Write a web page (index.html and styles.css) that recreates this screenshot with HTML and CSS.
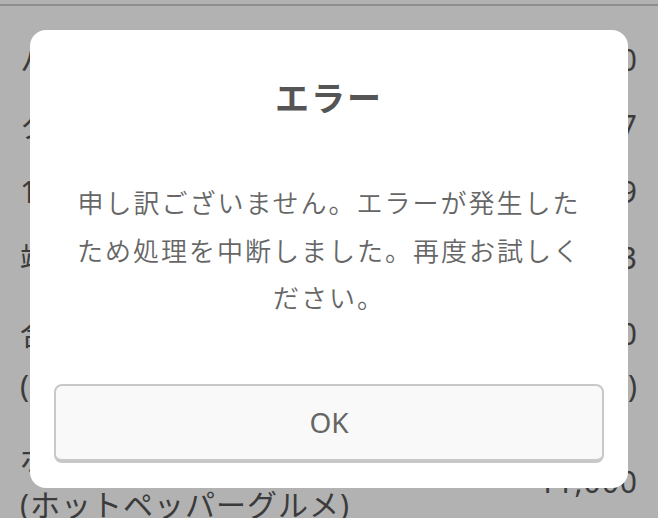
FILE: index.html
```html
<!DOCTYPE html>
<html lang="ja">
<head>
<meta charset="utf-8">
<title>エラー</title>
<link rel="stylesheet" href="styles.css">
</head>
<body>
<div class="page">
  <div class="header"></div>
  <ul class="rows">
    <li class="row"><span>ハンバーグ定食</span><span>1,000</span></li>
    <li class="row"><span>タピオカドリンク</span><span>457</span></li>
    <li class="row"><span>10%対象</span><span>1,459</span></li>
    <li class="row"><span>端数調整</span><span>-3</span></li>
    <li class="row row-total">
      <span class="stack"><span>合計</span><span>(税込)</span></span>
      <span class="stack right"><span>12,000</span><span>(税込)</span></span>
    </li>
    <li class="row row-point">
      <span class="stack"><span>ポイント利用</span><span>(ホットペッパーグルメ)</span></span>
      <span>11,000</span>
    </li>
  </ul>
</div>
<div class="overlay">
  <div class="dialog">
    <h2 class="dialog-title">エラー</h2>
    <p class="dialog-message">申し訳ございません。エラーが発生したため処理を中断しました。再度お試しください。</p>
    <button class="dialog-button" type="button">OK</button>
  </div>
</div>
</body>
</html>
```
FILE: styles.css
```css
html, body {
  margin: 0;
  padding: 0;
  height: 100%;
  overflow: hidden;
  background: #ffffff;
  font-family: "Noto Sans", "Noto Sans CJK JP", sans-serif;
}

.page {
  color: #555555;
}

.header {
  height: 4px;
  border-bottom: 2px solid #cccccc;
}

.rows {
  list-style: none;
  margin: 0;
  padding: 21px 20px 0;
}

.row {
  display: flex;
  justify-content: space-between;
  align-items: center;
  padding: 7px 0;
  font-size: 30px;
  line-height: 52px;
  letter-spacing: 1px;
}

.stack {
  display: flex;
  flex-direction: column;
}

.stack.right {
  align-items: flex-end;
}

.row-total {
  margin-top: 10px;
}

.row-point {
  margin-top: 10px;
  line-height: 46px;
}

.overlay {
  position: fixed;
  inset: 0;
  background: rgba(0, 0, 0, 0.3);
  display: flex;
  align-items: center;
  justify-content: center;
}

.dialog {
  width: calc(100% - 60px);
  box-sizing: border-box;
  background: #ffffff;
  border-radius: 16px;
  padding: 0 24px 25px;
  display: flex;
  flex-direction: column;
  text-align: center;
  font-family: "Noto Sans CJK JP", "Noto Sans", sans-serif;
}

.dialog-title {
  margin: 43px 0 0;
  font-size: 34px;
  line-height: 48px;
  font-weight: 700;
  letter-spacing: 2px;
  color: #555555;
}

.dialog-message {
  margin: 57px 0 0;
  padding: 0 12px;
  font-size: 26px;
  line-height: 47.5px;
  letter-spacing: 2px;
  font-weight: 350;
  color: #666666;
}

.dialog-button {
  margin-top: 63px;
  height: 79px;
  box-sizing: border-box;
  background: #f9f9f9;
  border: 2px solid #c8c8c8;
  border-bottom-width: 4px;
  border-radius: 8px;
  font-family: "Noto Sans", "Noto Sans CJK JP", sans-serif;
  font-size: 28px;
  color: #666666;
  letter-spacing: 0;
  padding: 0;
}
```
